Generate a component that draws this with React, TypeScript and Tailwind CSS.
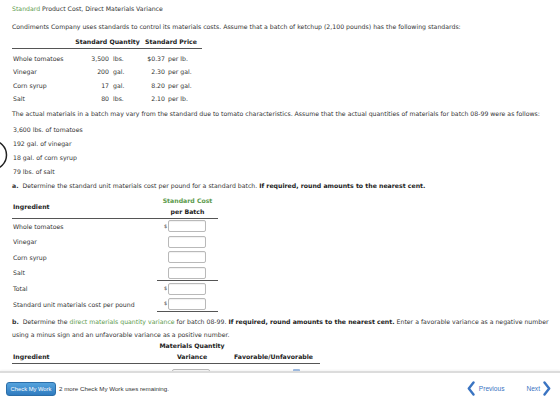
import React from 'react'

const green = 'text-[#5c9a4c]'

const standards = [
  { name: 'Whole tomatoes', qty: '3,500', unit: 'lbs.', price: '$0.37', per: 'per lb.' },
  { name: 'Vinegar', qty: '200', unit: 'gal.', price: '2.30', per: 'per gal.' },
  { name: 'Corn syrup', qty: '17', unit: 'gal.', price: '8.20', per: 'per gal.' },
  { name: 'Salt', qty: '80', unit: 'lbs.', price: '2.10', per: 'per lb.' },
]

const actuals = ['3,600 lbs. of tomatoes', '192 gal. of vinegar', '18 gal. of corn syrup', '79 lbs. of salt']

function AmountInput({ dollar }: { dollar?: boolean }) {
  return (
    <div className="flex items-center pl-[7px]">
      <span className="w-[4px] text-[5px] leading-none">{dollar ? '$' : ''}</span>
      <div className="h-[12px] w-[38px] rounded-[2px] border border-[#b9b9b9] bg-white shadow-[inset_0_1px_1px_rgba(0,0,0,0.06)]" />
    </div>
  )
}

function Chevron({ dir }: { dir: 'left' | 'right' }) {
  return (
    <svg width="8" height="15" viewBox="0 0 8 15" fill="none">
      <polyline
        points={dir === 'left' ? '6.5,1.5 1.8,7.5 6.5,13.5' : '1.5,1.5 6.2,7.5 1.5,13.5'}
        stroke="#3a74c2"
        strokeWidth="2.4"
        strokeLinecap="round"
        strokeLinejoin="round"
      />
    </svg>
  )
}

export default function App() {
  return (
    <div className="flex h-[401px] w-[560px] flex-col overflow-hidden bg-white font-['DejaVu_Sans',Verdana,sans-serif] text-[6.2px] text-[#333]">
      <div className="relative flex-1 overflow-hidden px-[12px] pt-[5px]">
        {/* ring drawn over the left margin */}
        <svg className="absolute left-0 top-[138px]" width="10" height="34" viewBox="0 0 10 34">
          <circle cx="-8" cy="17" r="14.5" fill="none" stroke="#222" strokeWidth="1.5" />
        </svg>

        <div className="h-[8px] whitespace-nowrap leading-[8px]">
          <span className={green}>Standard</span> Product Cost, Direct Materials Variance
        </div>
        <div className="mt-[10px] h-[8px] whitespace-nowrap leading-[8px]">
          Condiments Company uses standards to control its materials costs. Assume that a batch of ketchup (2,100 pounds) has the following standards:
        </div>

        {/* standards table */}
        <div className="mt-[7px] w-[190px]">
          <div className="flex h-[11px] items-start border-b border-[#555] font-bold text-[#222]">
            <div className="w-[63px]" />
            <div className="w-[65px] whitespace-nowrap text-center leading-[8px]">Standard Quantity</div>
            <div className="w-[62px] whitespace-nowrap text-center leading-[8px]">Standard Price</div>
          </div>
          <div className="mt-[3px]">
            {standards.map((s) => (
              <div key={s.name} className="flex h-[13.4px] items-center whitespace-nowrap">
                <div className="w-[63px] pl-[1px]">{s.name}</div>
                <div className="w-[36px] pr-[2px] text-right">{s.qty}</div>
                <div className="w-[29px] pl-[2px]">{s.unit}</div>
                <div className="w-[26px] pr-[1px] text-right">{s.price}</div>
                <div className="w-[36px] pl-[2px]">{s.per}</div>
              </div>
            ))}
          </div>
        </div>

        <div className="mt-[4px] h-[8px] whitespace-nowrap leading-[8px]">
          The actual materials in a batch may vary from the standard due to tomato characteristics. Assume that the actual quantities of materials for batch 08-99 were as follows:
        </div>
        <div className="mt-[5px]">
          {actuals.map((a) => (
            <div key={a} className="h-[14.3px] whitespace-nowrap pl-[1px] leading-[14.3px]">
              {a}
            </div>
          ))}
        </div>

        <div className="mt-[2px] h-[8px] whitespace-nowrap leading-[8px]">
          <span className="font-bold">a.</span>&nbsp; Determine the standard unit materials cost per pound for a standard batch.{' '}
          <span className="font-bold text-[#222]">If required, round amounts to the nearest cent.</span>
        </div>

        {/* part a table */}
        <div className="mt-[6px] w-[206px]">
          <div className="flex h-[23px] border-b border-[#555] font-bold text-[#222]">
            <div className="flex w-[145px] items-center pl-[1px]">Ingredient</div>
            <div className="w-[61px] whitespace-nowrap text-center">
              <div className={`h-[10px] leading-[10px] ${green}`}>Standard Cost</div>
              <div className="h-[12px] leading-[12px]">per Batch</div>
            </div>
          </div>
          {standards.map((s, i) => (
            <div key={s.name} className="flex h-[15.4px] items-center">
              <div className="w-[145px] pl-[1px]">{s.name}</div>
              <AmountInput dollar={i === 0} />
            </div>
          ))}
          <div className="flex h-[16px] items-center">
            <div className="w-[145px] pl-[1px]">Total</div>
            <div className="flex h-full w-[61px] items-center border-t border-[#555]">
              <AmountInput dollar />
            </div>
          </div>
          <div className="flex h-[16px] items-center">
            <div className="w-[145px] whitespace-nowrap pl-[1px]">Standard unit materials cost per pound</div>
            <div className="flex h-full w-[61px] items-center border-b border-[#555]">
              <AmountInput dollar />
            </div>
          </div>
        </div>

        <div className="mt-[3px] whitespace-nowrap leading-[13px]">
          <span className="font-bold">b.</span>&nbsp; Determine the <span className={green}>direct materials quantity variance</span> for batch 08-99.{' '}
          <span className="font-bold text-[#222]">If required, round amounts to the nearest cent.</span> Enter a favorable variance as a negative number
          <br />
          using a minus sign and an unfavorable variance as a positive number.
        </div>

        {/* part b table, runs under the footer */}
        <div className="w-[308px]">
          <div className="flex border-b border-[#555] font-bold text-[#222]">
            <div className="flex w-[145px] items-end pl-[1px] leading-[13px]">Ingredient</div>
            <div className="w-[70px] whitespace-nowrap text-center">
              <div className="h-[9px] leading-[9px]">Materials Quantity</div>
              <div className="h-[13px] leading-[13px]">Variance</div>
            </div>
            <div className="flex w-[93px] items-end justify-center whitespace-nowrap leading-[13px]">Favorable/Unfavorable</div>
          </div>
          <div className="flex h-[22px] items-center">
            <div className="w-[145px] pl-[1px]">Whole tomatoes</div>
            <div className="w-[70px] pl-[4px]">
              <AmountInput dollar />
            </div>
            <div className="flex w-[93px] self-start pl-[66px] pt-[5px]">
              <div className="h-[3px] w-[7px] rounded-[1px] bg-[#9db9de]" />
            </div>
          </div>
        </div>
      </div>

      <div className="flex h-[30px] shrink-0 items-center border-t-2 border-[#dcdcdc] bg-white px-[6px] pt-[3px] font-['Liberation_Sans',Arial,sans-serif] shadow-[0_-1px_2px_rgba(0,0,0,0.05)]">
        <button className="flex h-[14px] w-[50px] items-center justify-center whitespace-nowrap rounded-[3px] border border-[#2c6ea8] bg-gradient-to-b from-[#55a3dd] to-[#2f7bbf] p-0 text-[5.8px] leading-[10px] text-white">
          Check My Work
        </button>
        <span className="ml-[3px] whitespace-nowrap text-[6.2px] leading-[10px] text-[#333]">2 more Check My Work uses remaining.</span>
        <div className="ml-auto flex items-center gap-[4px] text-[6.6px] leading-[10px] text-[#3a74c2]">
          <Chevron dir="left" />
          <span>Previous</span>
        </div>
        <div className="ml-[22px] mr-[3px] flex items-center gap-[3px] text-[6.6px] leading-[10px] text-[#3a74c2]">
          <span>Next</span>
          <Chevron dir="right" />
        </div>
      </div>
    </div>
  )
}
